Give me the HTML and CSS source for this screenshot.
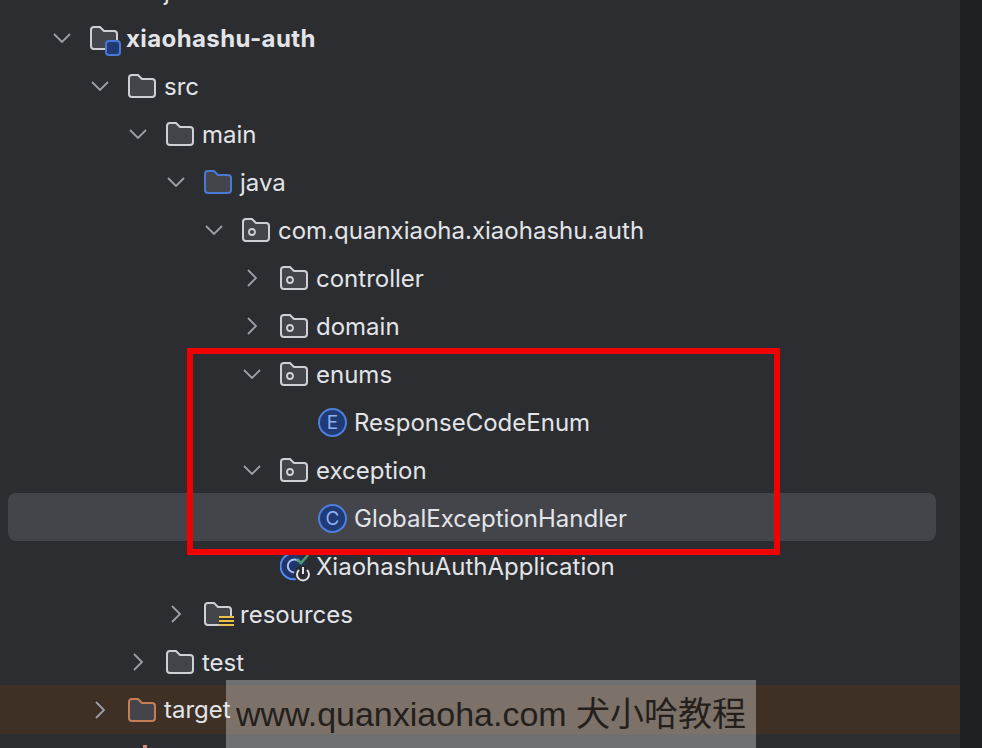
FILE: index.html
```html
<!DOCTYPE html>
<html lang="zh-CN">
<head>
    <meta charset="UTF-8">
    <title>xiaohashu-auth</title>
    <link rel="stylesheet" href="styles.css">
</head>
<body>
    <svg class="sprites" width="0" height="0">
        <symbol id="chev-down" viewBox="0 0 20 20"><path d="M2 6l8 8 8-8" fill="none" stroke="currentColor" stroke-width="1.8"/></symbol>
        <symbol id="chev-right" viewBox="0 0 20 20"><path d="M6 2l8 8-8 8" fill="none" stroke="currentColor" stroke-width="1.8"/></symbol>
        <symbol id="folder" viewBox="0 0 28 24"><path d="M1 4a3 3 0 0 1 3-3h6l4 4h10a3 3 0 0 1 3 3v12a3 3 0 0 1-3 3H4a3 3 0 0 1-3-3z" fill="#43454a" stroke="currentColor" stroke-width="2"/></symbol>
        <symbol id="package" viewBox="0 0 28 24"><path d="M1 4a3 3 0 0 1 3-3h6l4 4h10a3 3 0 0 1 3 3v12a3 3 0 0 1-3 3H4a3 3 0 0 1-3-3z" fill="#43454a" stroke="currentColor" stroke-width="2"/><circle cx="10" cy="14" r="3" fill="none" stroke="currentColor" stroke-width="1.8"/></symbol>
    </svg>

    <div class="tree">
        <div class="row cut-top lvl-2"><span class="chev"></span><span class="icon"></span><span class="label">j</span></div>

        <div class="row lvl-1">
            <svg class="chev"><use href="#chev-down"/></svg>
            <span class="icon">
                <svg class="folder"><use href="#folder"/></svg>
                <span class="module-badge"></span>
            </span>
            <span class="label bold">xiaohashu-auth</span>
        </div>
        <div class="row lvl-2">
            <svg class="chev"><use href="#chev-down"/></svg>
            <span class="icon"><svg class="folder"><use href="#folder"/></svg></span>
            <span class="label">src</span>
        </div>
        <div class="row lvl-3">
            <svg class="chev"><use href="#chev-down"/></svg>
            <span class="icon"><svg class="folder"><use href="#folder"/></svg></span>
            <span class="label">main</span>
        </div>
        <div class="row lvl-4">
            <svg class="chev"><use href="#chev-down"/></svg>
            <span class="icon"><svg class="folder blue"><use href="#folder"/></svg></span>
            <span class="label">java</span>
        </div>
        <div class="row lvl-5">
            <svg class="chev"><use href="#chev-down"/></svg>
            <span class="icon"><svg class="folder"><use href="#package"/></svg></span>
            <span class="label">com.quanxiaoha.xiaohashu.auth</span>
        </div>
        <div class="row lvl-6">
            <svg class="chev"><use href="#chev-right"/></svg>
            <span class="icon"><svg class="folder"><use href="#package"/></svg></span>
            <span class="label">controller</span>
        </div>
        <div class="row lvl-6">
            <svg class="chev"><use href="#chev-right"/></svg>
            <span class="icon"><svg class="folder"><use href="#package"/></svg></span>
            <span class="label">domain</span>
        </div>
        <div class="row lvl-6">
            <svg class="chev"><use href="#chev-down"/></svg>
            <span class="icon"><svg class="folder"><use href="#package"/></svg></span>
            <span class="label">enums</span>
        </div>
        <div class="row lvl-7">
            <span class="chev"></span>
            <span class="icon"><span class="class-icon">E</span></span>
            <span class="label">ResponseCodeEnum</span>
        </div>
        <div class="row lvl-6">
            <svg class="chev"><use href="#chev-down"/></svg>
            <span class="icon"><svg class="folder"><use href="#package"/></svg></span>
            <span class="label">exception</span>
        </div>
        <div class="row lvl-7 selected">
            <span class="chev"></span>
            <span class="icon"><span class="class-icon">C</span></span>
            <span class="label">GlobalExceptionHandler</span>
        </div>
        <div class="row lvl-6">
            <span class="chev"></span>
            <span class="icon">
                <svg class="app-icon" viewBox="0 0 36 32">
                    <circle cx="13" cy="16" r="12.5" fill="#20366b"/>
                    <path d="M16 3.4a13 13 0 1 0 3 24.6" fill="none" stroke="#548af7" stroke-width="2"/>
                    <path d="M19 11.5a6.5 6.5 0 1 0 0 9" fill="none" stroke="#a9c4fa" stroke-width="2"/>
                    <path d="M17 9l4 4 7-8" fill="none" stroke="#4f9a6a" stroke-width="2.6"/>
                    <circle cx="23" cy="24" r="9" fill="#2b2d30"/>
                    <path d="M19 20a6 6 0 1 0 8 0" fill="none" stroke="#e4e5e8" stroke-width="2"/>
                    <path d="M23 17v7" fill="none" stroke="#e4e5e8" stroke-width="2"/>
                </svg>
            </span>
            <span class="label">XiaohashuAuthApplication</span>
        </div>
        <div class="row lvl-4">
            <svg class="chev"><use href="#chev-right"/></svg>
            <span class="icon">
                <svg class="folder"><use href="#folder"/></svg>
                <span class="res-badge"></span>
            </span>
            <span class="label">resources</span>
        </div>
        <div class="row lvl-3">
            <svg class="chev"><use href="#chev-right"/></svg>
            <span class="icon"><svg class="folder"><use href="#folder"/></svg></span>
            <span class="label">test</span>
        </div>
        <div class="row lvl-2 excluded">
            <svg class="chev"><use href="#chev-right"/></svg>
            <span class="icon"><svg class="folder orange"><use href="#folder"/></svg></span>
            <span class="label">target</span>
        </div>
        <div class="row lvl-2 cut-bottom">
            <span class="chev"></span>
            <span class="icon"><span class="file-tick"></span></span>
            <span class="label">xiaohashu-auth.iml</span>
        </div>
    </div>

    <div class="red-box"></div>
    <div class="watermark">www.quanxiaoha.com 犬小哈教程</div>
</body>
</html>
```

FILE: styles.css
```css
html, body {
    margin: 0;
    height: 100%;
    overflow: hidden;
}
body {
    background-color: #1e2023;
    font-family: "Inter", "Noto Sans CJK SC", sans-serif;
    color: #e3e4e8;
    position: relative;
}
.sprites {
    position: absolute;
}
.tree {
    width: 960px;
    height: 748px;
    background-color: #2b2d30;
    overflow: hidden;
}
.row {
    display: flex;
    align-items: center;
    height: 48px;
    font-size: 24px;
}
.cut-top {
    height: 14px;
    align-items: flex-end;
    overflow: hidden;
}
.cut-top .label {
    margin-bottom: 8px;
}
.cut-bottom {
    margin-top: -1px;
}
.lvl-1 { padding-left: 52px; }
.lvl-2 { padding-left: 90px; }
.lvl-3 { padding-left: 128px; }
.lvl-4 { padding-left: 166px; }
.lvl-5 { padding-left: 204px; }
.lvl-6 { padding-left: 242px; }
.lvl-7 { padding-left: 280px; }
.chev {
    width: 20px;
    height: 20px;
    margin-right: 18px;
    color: #9da0a8;
    flex: none;
}
.icon {
    position: relative;
    display: flex;
    align-items: center;
    width: 36px;
    height: 32px;
    flex: none;
}
.folder {
    width: 28px;
    height: 24px;
    color: #ced0d6;
}
.folder.blue { color: #4a78d6; }
.folder.orange { color: #c77d55; }
.module-badge {
    position: absolute;
    left: 15px;
    top: 18px;
    width: 12px;
    height: 12px;
    border: 2px solid #4a78d6;
    border-radius: 4px;
    background-color: #1f3a75;
}
.res-badge {
    position: absolute;
    left: 15px;
    top: 18px;
    width: 15px;
    height: 12px;
    background: repeating-linear-gradient(#e8c14f 0 2px, #2b2d30 2px 4px);
}
.class-icon {
    width: 25px;
    height: 25px;
    border: 2px solid #4f7fdc;
    border-radius: 50%;
    background-color: #1f3a75;
    color: #8fb0f2;
    font-size: 19px;
    line-height: 25px;
    text-align: center;
}
.app-icon {
    width: 36px;
    height: 32px;
}
.file-tick {
    position: absolute;
    left: 15px;
    top: 4px;
    width: 4px;
    height: 8px;
    background-color: #d98a7a;
}
.label {
    white-space: nowrap;
}
.bold {
    font-weight: 700;
    letter-spacing: 0.4px;
}
.selected {
    position: relative;
}
.selected::before {
    content: "";
    position: absolute;
    left: 8px;
    top: -1px;
    width: 928px;
    height: 48px;
    border-radius: 8px;
    background-color: #43454a;
}
.selected > * {
    position: relative;
}
.excluded {
    height: 49px;
    margin-top: -1px;
    background-color: #3e3024;
}
.red-box {
    position: absolute;
    left: 187px;
    top: 348px;
    width: 581px;
    height: 195px;
    border: 6.5px solid #f00000;
}
.watermark {
    position: absolute;
    left: 226px;
    top: 680px;
    width: 530px;
    height: 68px;
    padding-top: 12px;
    box-sizing: border-box;
    background-color: rgba(255, 255, 255, 0.32);
    color: #241f1b;
    font-family: "Liberation Sans", "Noto Sans CJK SC", sans-serif;
    font-size: 34px;
    line-height: 44px;
    text-align: center;
    white-space: nowrap;
}
```
